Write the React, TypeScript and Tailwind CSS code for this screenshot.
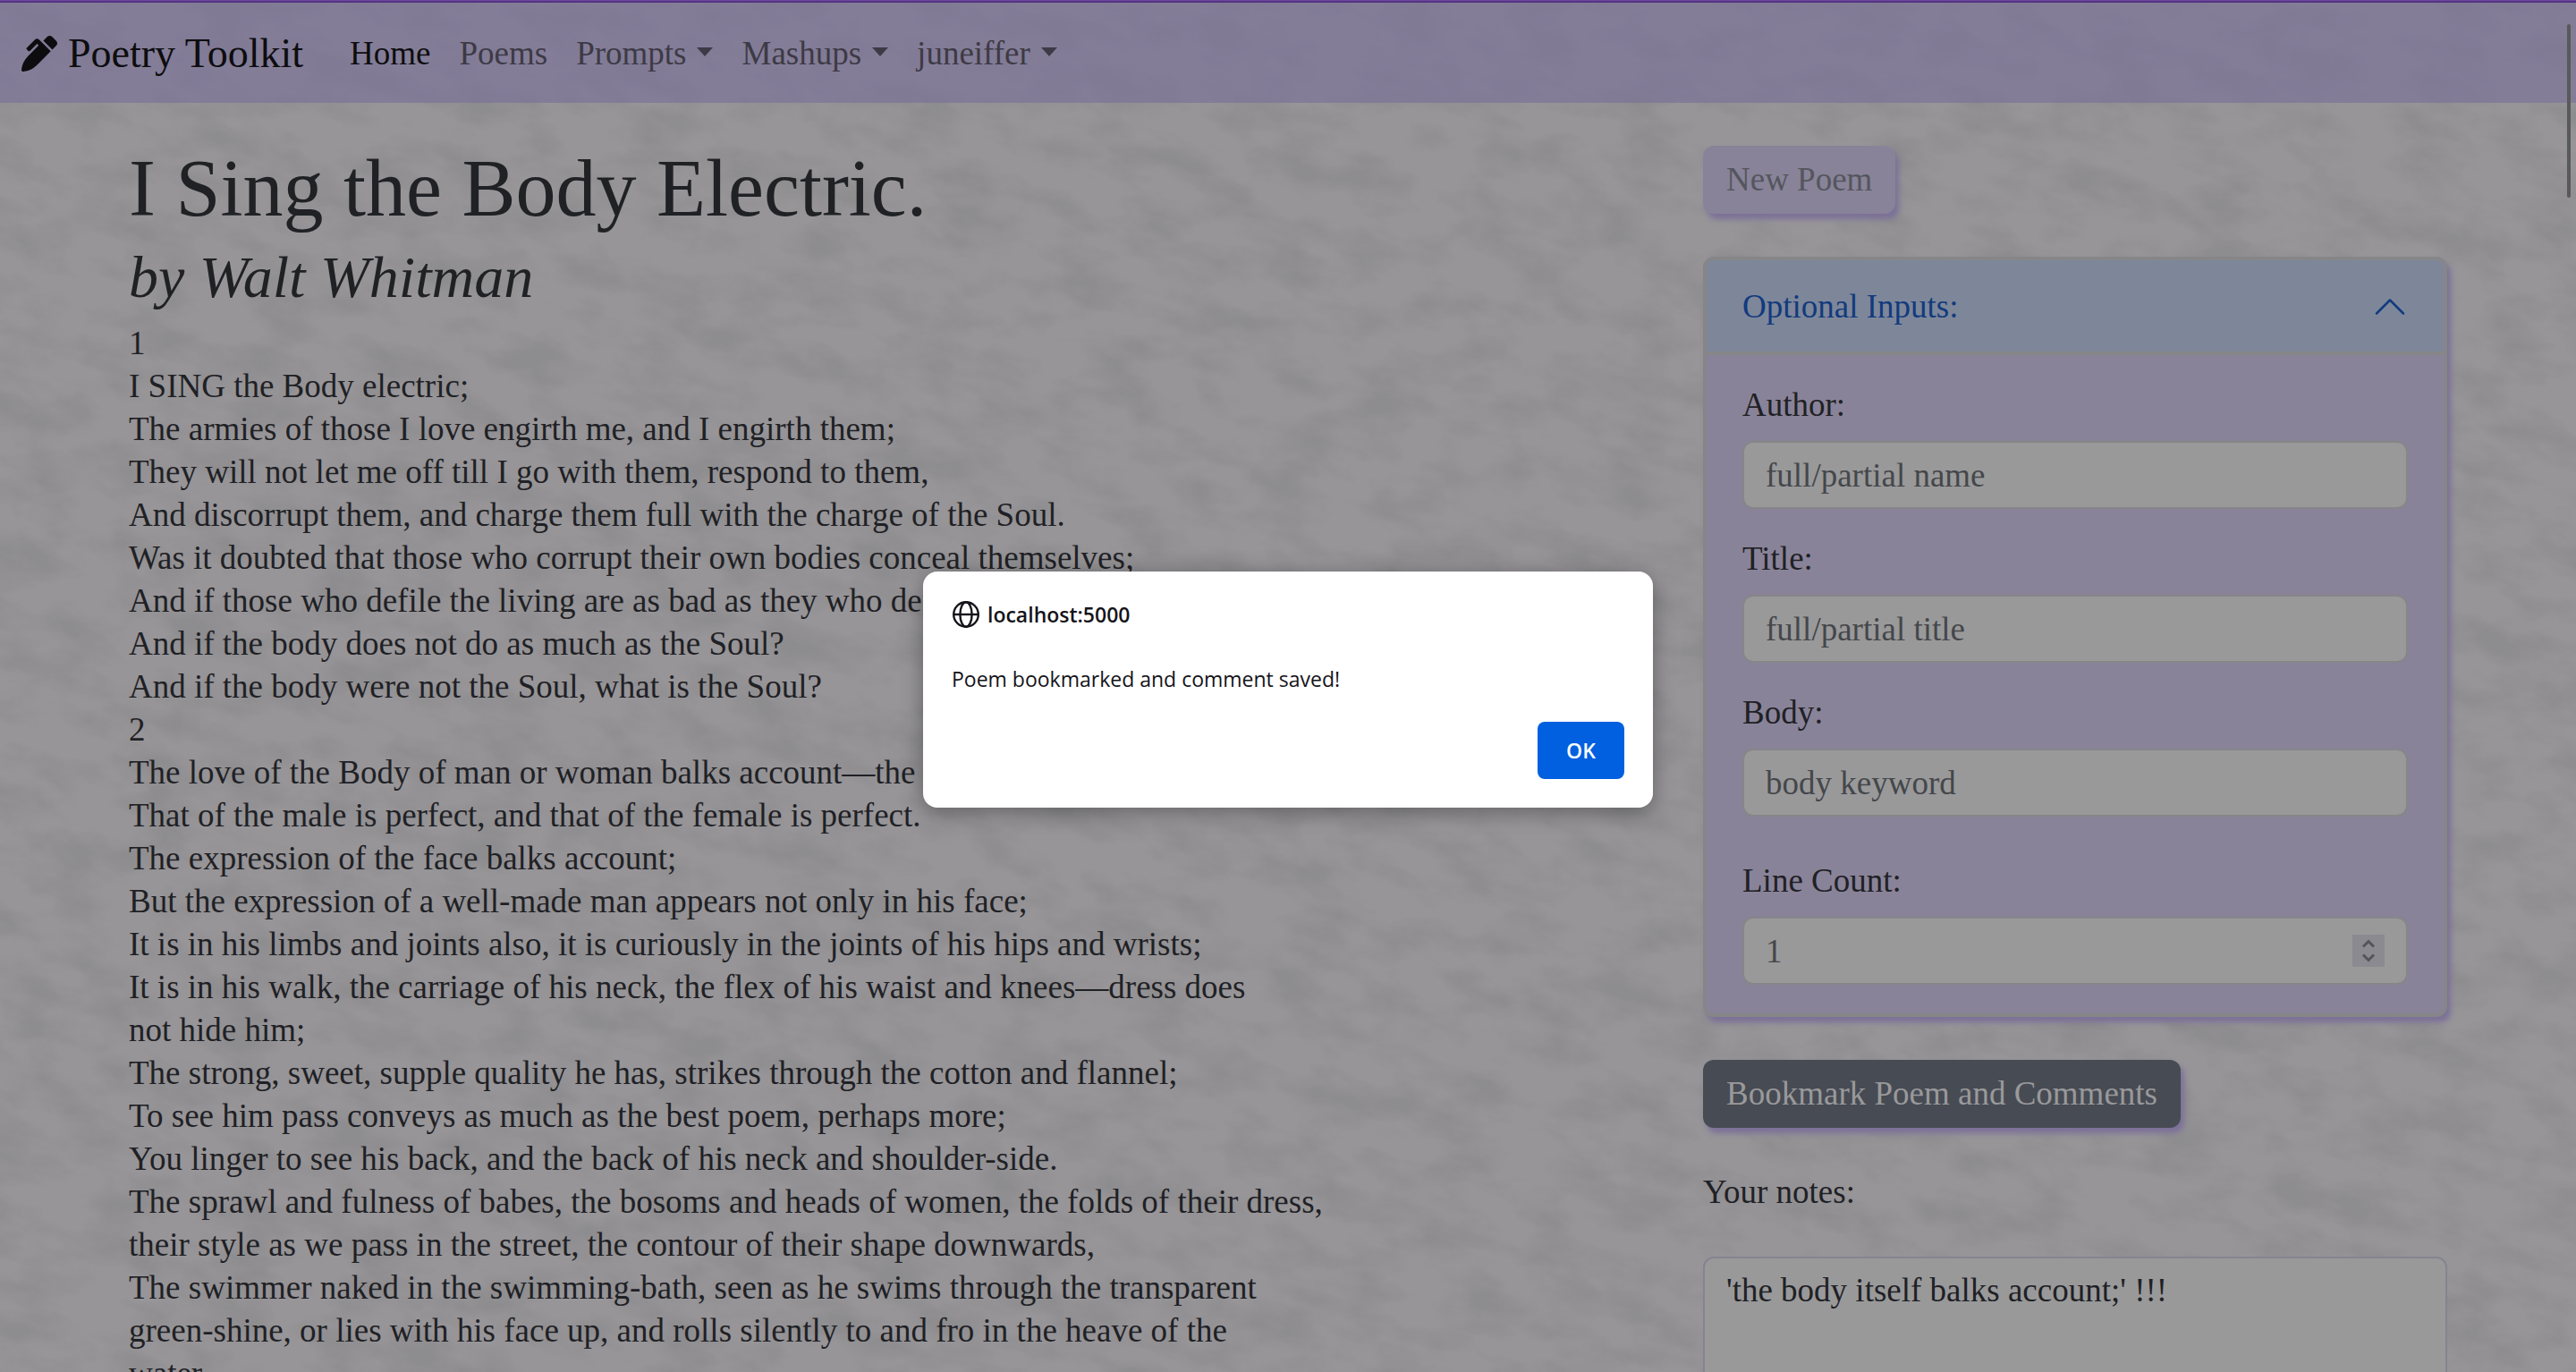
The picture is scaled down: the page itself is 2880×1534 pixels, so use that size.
import { FaPenAlt } from "react-icons/fa";

const serif = "font-['Liberation_Serif',serif]";

const poem = [
  "1",
  "I SING the Body electric;",
  "The armies of those I love engirth me, and I engirth them;",
  "They will not let me off till I go with them, respond to them,",
  "And discorrupt them, and charge them full with the charge of the Soul.",
  "Was it doubted that those who corrupt their own bodies conceal themselves;",
  "And if those who defile the living are as bad as they who defile the dead?",
  "And if the body does not do as much as the Soul?",
  "And if the body were not the Soul, what is the Soul?",
  "2",
  "The love of the Body of man or woman balks account—the body itself balks account;",
  "That of the male is perfect, and that of the female is perfect.",
  "The expression of the face balks account;",
  "But the expression of a well-made man appears not only in his face;",
  "It is in his limbs and joints also, it is curiously in the joints of his hips and wrists;",
  "It is in his walk, the carriage of his neck, the flex of his waist and knees—dress does",
  "not hide him;",
  "The strong, sweet, supple quality he has, strikes through the cotton and flannel;",
  "To see him pass conveys as much as the best poem, perhaps more;",
  "You linger to see his back, and the back of his neck and shoulder-side.",
  "The sprawl and fulness of babes, the bosoms and heads of women, the folds of their dress,",
  "their style as we pass in the street, the contour of their shape downwards,",
  "The swimmer naked in the swimming-bath, seen as he swims through the transparent",
  "green-shine, or lies with his face up, and rolls silently to and fro in the heave of the",
  "water,",
];

const links = [
  { label: "Home", active: true, menu: false },
  { label: "Poems", active: false, menu: false },
  { label: "Prompts", active: false, menu: true },
  { label: "Mashups", active: false, menu: true },
  { label: "juneiffer", active: false, menu: true },
];

const inputClass =
  "h-[76px] w-full rounded-xl border-2 border-[#868689] bg-[#99999a] px-6 text-[37px] text-[#1f2125] placeholder:text-[#45474a] placeholder:opacity-100";

function PaperTexture() {
  return (
    <svg className="absolute inset-0 h-full w-full" aria-hidden="true">
      <filter id="paper" x="0" y="0" width="100%" height="100%" colorInterpolationFilters="sRGB">
        <feTurbulence type="fractalNoise" baseFrequency="0.014 0.026" numOctaves="6" seed="8" result="n" />
        <feColorMatrix
          in="n"
          type="matrix"
          values="0 0 0 0 0.49  0 0 0 0 0.49  0 0 0 0 0.49  2.6 0 0 0 -1.05"
        />
      </filter>
      <rect x="-20%" y="-60%" width="150%" height="240%" filter="url(#paper)" opacity="0.36" transform="rotate(14)" />
    </svg>
  );
}

function Field({ id, label, placeholder }: { id: string; label: string; placeholder: string }) {
  return (
    <div className="flex flex-col gap-4">
      <label htmlFor={id}>{label}</label>
      <input id={id} type="text" placeholder={placeholder} className={inputClass} />
    </div>
  );
}

function Navbar() {
  return (
    <nav className="flex h-28 items-center bg-[#7a7098]/65 px-6 pt-0.5">
      <a href="#home" className="mr-9 flex items-center gap-3 text-[46px] leading-[60px] text-[#0d0d0f]">
        <FaPenAlt className="size-10" />
        Poetry Toolkit
      </a>
      {links.map((l) =>
        l.menu ? (
          <button key={l.label} type="button" className="flex items-center gap-3 px-4 text-[#3d3a45]">
            {l.label}
            <svg viewBox="0 0 18 10" className="-mt-1 h-[10px] w-[18px]" aria-hidden="true">
              <path d="M0 0h18l-9 10z" fill="currentColor" />
            </svg>
          </button>
        ) : (
          <a key={l.label} href="#nav" className={l.active ? "px-4 text-[#0d0d0f]" : "px-4 text-[#3d3a45]"}>
            {l.label}
          </a>
        ),
      )}
    </nav>
  );
}

function OptionalInputs() {
  return (
    <section className="overflow-hidden rounded-xl border-4 border-[#868689] bg-[#898399] shadow-[4px_6px_6px_#7c7098]">
      <button
        type="button"
        aria-expanded="true"
        className="flex h-[106px] w-full items-center justify-between border-b-4 border-[#868689] bg-[#7d8799] px-10 pt-0.5 text-[#123a7e]"
      >
        Optional Inputs:
        <svg viewBox="0 0 16 16" className="size-10" aria-hidden="true">
          <path
            d="M2 11l6-6 6 6"
            fill="none"
            stroke="currentColor"
            strokeWidth="1"
            strokeLinecap="round"
            strokeLinejoin="round"
          />
        </svg>
      </button>
      <form className="flex flex-col gap-8 px-10 py-8" onSubmit={(e) => e.preventDefault()}>
        <Field id="author" label="Author:" placeholder="full/partial name" />
        <Field id="title" label="Title:" placeholder="full/partial title" />
        <Field id="body" label="Body:" placeholder="body keyword" />
        <div className="mt-4 flex flex-col gap-4">
          <label htmlFor="lines">Line Count:</label>
          <div className="relative">
            <input
              id="lines"
              type="number"
              placeholder="1"
              className={`${inputClass} [appearance:textfield] [&::-webkit-inner-spin-button]:appearance-none`}
            />
            <div className="absolute top-5 right-[26px] flex size-9 items-center justify-center bg-[#8b8a91] text-[#55545c]">
              <svg viewBox="0 0 36 36" className="size-9" aria-hidden="true">
                <path
                  d="M12 13.500l6-6 6 6M12 22.500l6 6 6-6"
                  fill="none"
                  stroke="currentColor"
                  strokeWidth="3"
                />
              </svg>
            </div>
          </div>
        </div>
      </form>
    </section>
  );
}

function AlertDialog() {
  return (
    <div className="absolute inset-x-0 top-[639px] flex justify-center">
      <div
        role="alertdialog"
        aria-labelledby="alert-title"
        aria-describedby="alert-text"
        className="flex w-[816px] flex-col rounded-2xl bg-white p-8 pt-7 font-['Open_Sans','Noto_Sans',sans-serif] text-[23px] leading-[40px] text-[#15141a] shadow-[0_4px_24px_rgba(0,0,0,0.35)]"
      >
        <div className="flex items-center gap-2 font-semibold">
          <svg viewBox="0 0 32 32" className="size-8" fill="none" stroke="currentColor" strokeWidth="2.400" aria-hidden="true">
            <circle cx="16" cy="16" r="13.800" />
            <ellipse cx="16" cy="16" rx="6.600" ry="13.800" />
            <path d="M2.200 16h27.600" />
          </svg>
          <h2 id="alert-title">localhost:5000</h2>
        </div>
        <p id="alert-text" className="mt-8">
          Poem bookmarked and comment saved!
        </p>
        <button type="button" className="mt-7 h-16 w-[97px] self-end rounded-lg bg-[#0060df] font-semibold text-white">
          OK
        </button>
      </div>
    </div>
  );
}

export default function App() {
  return (
    <div className={`relative h-screen overflow-hidden bg-[#979598] text-[37px] leading-[48px] text-[#1f2125] ${serif}`}>
      <PaperTexture />
      <div className="relative">
        <div className="h-[3px] border-t border-[#6a4a9c] bg-[#553382]" />
        <Navbar />
        <main className="mx-auto flex w-full max-w-[2640px] pt-12">
          <article className="w-2/3 px-6 whitespace-nowrap">
            <h1 className="text-[90px] leading-[96px]">I Sing the Body Electric.</h1>
            <h2 className="mt-4 mb-4 text-[66px] leading-[69px] italic">by Walt Whitman</h2>
            {poem.map((line) => (
              <p key={line}>{line}</p>
            ))}
          </article>
          <aside className="flex w-1/3 flex-col gap-12 px-6">
            <button
              type="button"
              className="h-[76px] self-start rounded-xl bg-[#898399] px-[26px] text-[#54565e] shadow-[4px_6px_6px_#7c7098]"
            >
              New Poem
            </button>
            <OptionalInputs />
            <button
              type="button"
              className="h-[76px] self-start rounded-xl bg-[#474b54] px-[26px] text-[#99999a] shadow-[4px_6px_6px_#7c7098]"
            >
              Bookmark Poem and Comments
            </button>
            <label htmlFor="notes">Your notes:</label>
            <textarea
              id="notes"
              rows={6}
              defaultValue="'the body itself balks account;' !!!"
              className="w-full resize-none rounded-xl border-2 border-[#868490] bg-[#99999a] px-6 py-3"
            />
          </aside>
        </main>
      </div>
      <div className="absolute top-[27px] right-1.5 h-[194px] w-1 rounded-full bg-[#58595a]" />
      <AlertDialog />
    </div>
  );
}
